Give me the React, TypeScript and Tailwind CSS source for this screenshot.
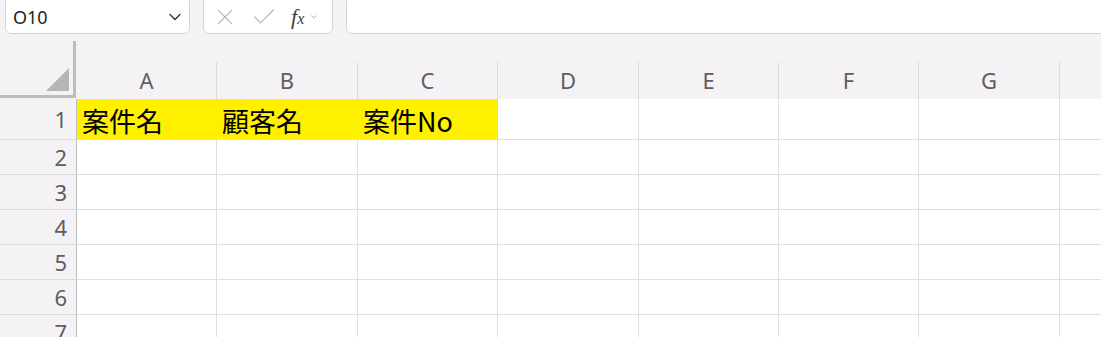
import { ChevronDown, X, Check } from "lucide-react";

const columns = ["A", "B", "C", "D", "E", "F", "G"];
const colWidths = ["w-[140px]", "w-[141px]", "w-[140px]", "w-[141px]", "w-[140px]", "w-[140px]", "w-[141px]"];
const headerRow = ["案件名", "顧客名", "案件No"];

const uiFont = { fontFamily: '"Noto Sans", "Liberation Sans", sans-serif' };
const cellFont = { fontFamily: '"Noto Sans CJK JP", "Noto Sans", sans-serif' };

function FormulaBar() {
  return (
    <div className="flex h-[41px] items-start overflow-hidden">
      <div className="ml-[5px] -mt-[4px] flex h-[38px] w-[185px] items-center justify-between rounded-md border border-[#d4d4d4] bg-white pl-[7px] pr-[4px] pt-[4px]">
        <span className="text-[18px] text-[#242424]" style={uiFont}>
          O10
        </span>
        <ChevronDown className="h-[20px] w-[20px] text-[#333]" strokeWidth={1.6} />
      </div>
      <div className="ml-[13px] -mt-[4px] flex h-[38px] w-[130px] items-center rounded-md border border-[#d4d4d4] bg-white pt-[4px]">
        <X className="ml-[8px] h-[26px] w-[26px] text-[#b8b8b8]" strokeWidth={1.1} />
        <Check className="ml-[12px] h-[28px] w-[28px] text-[#b8b8b8]" strokeWidth={1.1} />
        <span className="ml-[13px] text-[22px] italic leading-none text-[#3c3c3c]" style={{ fontFamily: '"Liberation Serif", serif' }}>
          f<span className="text-[16px]">x</span>
        </span>
        <ChevronDown className="ml-[5px] h-[10px] w-[10px] text-[#a0a0a0]" strokeWidth={2} />
      </div>
      <div className="ml-[13px] -mr-4 -mt-[4px] h-[38px] flex-1 rounded-md border border-[#d4d4d4] bg-white" />
    </div>
  );
}

function ColumnHeaders() {
  return (
    <div className="flex h-[58px]">
      <div className="w-[77px] shrink-0">
        <div className="relative h-[57px] w-[76px] border-b-[3px] border-r-[3px] border-[#bdbdbd]">
          <svg className="absolute left-[46px] top-[27px]" width="23" height="23" viewBox="0 0 23 23">
            <polygon points="23,0 23,23 0,23" fill="#b5b5b5" />
          </svg>
        </div>
      </div>
      {columns.map((c, i) => (
        <div key={c} className={`${colWidths[i]} shrink-0 pt-[21px]`}>
          <div className="flex h-full items-center justify-center border-r border-[#dcdcdc] text-[22px] text-[#5e5e5e]" style={uiFont}>
            {c}
          </div>
        </div>
      ))}
      <div className="flex-1" />
    </div>
  );
}

function Row({ n, cells, tall }: { n: number; cells?: string[]; tall?: boolean }) {
  return (
    <div className={`flex ${tall ? "h-[41px]" : "h-[35px]"}`}>
      <div
        className="flex w-[77px] shrink-0 items-center justify-end border-b border-r border-b-[#dcdcdc] border-r-[#bdbdbd] pr-[9px] text-[22px] text-[#5e5e5e]"
        style={uiFont}
      >
        {n}
      </div>
      {columns.map((c, i) => {
        const text = cells?.[i];
        const filled = cells && i < cells.length;
        return (
          <div
            key={c}
            className={`${colWidths[i]} flex shrink-0 items-center border-b border-r border-[#dfdfdf] pl-[5px] pt-[2px] text-[27px] leading-none text-black ${
              filled ? "border-r-[#fff000] bg-[#fff000] border-b-[#dfdfdf]" : "bg-white"
            }`}
            style={cellFont}
          >
            {text}
          </div>
        );
      })}
      <div className="flex-1 border-b border-[#dfdfdf] bg-white" />
    </div>
  );
}

export default function App() {
  return (
    <div className="h-[337px] w-[1101px] overflow-hidden bg-[#f4f2f5]">
      <FormulaBar />
      <ColumnHeaders />
      <Row n={1} cells={headerRow} tall />
      {[2, 3, 4, 5, 6, 7].map((n) => (
        <Row key={n} n={n} />
      ))}
    </div>
  );
}
